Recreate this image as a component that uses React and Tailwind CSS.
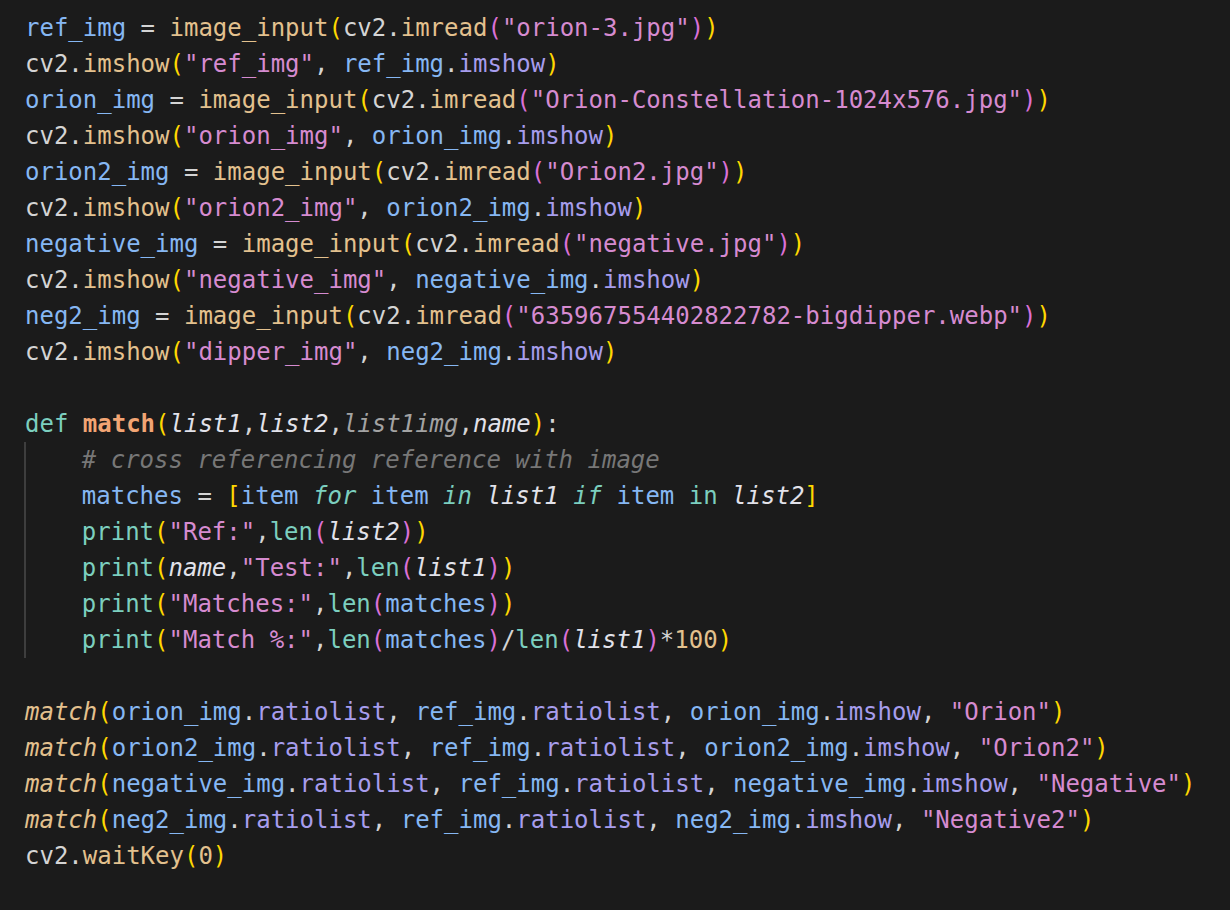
import React from "react";

const W = "text-[#d4d4d4]";
const V = "text-[#86b7f3]";
const F = "text-[#e3c18e]";
const S = "text-[#d68bd0]";
const P = "text-[#a79ded]";
const K = "text-[#7ccfbf]";
const KI = "text-[#7ccfbf] italic";
const Y = "text-[#ffd700]";
const PK = "text-[#da70d6]";
const PI = "text-[#e2e2ea] italic";
const DIM = "text-[#a3a3a3] italic";
const C = "text-[#777777] italic";
const FI = "text-[#e3c18e] italic";
const DN = "text-[#f2a574] font-bold";
const N = "text-[#e3c18e]";

const assign = (name, file) => [
  [name, V],
  [" = ", W],
  ["image_input", F],
  ["(", Y],
  ["cv2.", W],
  ["imread", F],
  ["(", PK],
  ['"' + file + '"', S],
  [")", PK],
  [")", Y],
];

const show = (label, name) => [
  ["cv2.", W],
  ["imshow", F],
  ["(", Y],
  ['"' + label + '"', S],
  [", ", W],
  [name, V],
  [".", W],
  ["imshow", P],
  [")", Y],
];

const call = (name, label) => [
  ["match", FI],
  ["(", Y],
  [name, V],
  [".", W],
  ["ratiolist", P],
  [", ", W],
  ["ref_img", V],
  [".", W],
  ["ratiolist", P],
  [", ", W],
  [name, V],
  [".", W],
  ["imshow", P],
  [", ", W],
  ['"' + label + '"', S],
  [")", Y],
];

const lines = [
  { t: assign("ref_img", "orion-3.jpg") },
  { t: show("ref_img", "ref_img") },
  { t: assign("orion_img", "Orion-Constellation-1024x576.jpg") },
  { t: show("orion_img", "orion_img") },
  { t: assign("orion2_img", "Orion2.jpg") },
  { t: show("orion2_img", "orion2_img") },
  { t: assign("negative_img", "negative.jpg") },
  { t: show("negative_img", "negative_img") },
  { t: assign("neg2_img", "635967554402822782-bigdipper.webp") },
  { t: show("dipper_img", "neg2_img") },
  { t: [] },
  {
    t: [
      ["def", K],
      [" ", W],
      ["match", DN],
      ["(", Y],
      ["list1", PI],
      [",", W],
      ["list2", PI],
      [",", W],
      ["list1img", DIM],
      [",", W],
      ["name", PI],
      [")", Y],
      [":", W],
    ],
  },
  { i: true, t: [["# cross referencing reference with image", C]] },
  {
    i: true,
    t: [
      ["matches", V],
      [" = ", W],
      ["[", Y],
      ["item", V],
      [" ", W],
      ["for", KI],
      [" ", W],
      ["item", V],
      [" ", W],
      ["in", KI],
      [" ", W],
      ["list1", PI],
      [" ", W],
      ["if", KI],
      [" ", W],
      ["item", V],
      [" ", W],
      ["in", K],
      [" ", W],
      ["list2", PI],
      ["]", Y],
    ],
  },
  {
    i: true,
    t: [
      ["print", K],
      ["(", Y],
      ['"Ref:"', S],
      [",", W],
      ["len", K],
      ["(", PK],
      ["list2", PI],
      [")", PK],
      [")", Y],
    ],
  },
  {
    i: true,
    t: [
      ["print", K],
      ["(", Y],
      ["name", PI],
      [",", W],
      ['"Test:"', S],
      [",", W],
      ["len", K],
      ["(", PK],
      ["list1", PI],
      [")", PK],
      [")", Y],
    ],
  },
  {
    i: true,
    t: [
      ["print", K],
      ["(", Y],
      ['"Matches:"', S],
      [",", W],
      ["len", K],
      ["(", PK],
      ["matches", V],
      [")", PK],
      [")", Y],
    ],
  },
  {
    i: true,
    t: [
      ["print", K],
      ["(", Y],
      ['"Match %:"', S],
      [",", W],
      ["len", K],
      ["(", PK],
      ["matches", V],
      [")", PK],
      ["/", W],
      ["len", K],
      ["(", PK],
      ["list1", PI],
      [")", PK],
      ["*", W],
      ["100", N],
      [")", Y],
    ],
  },
  { t: [] },
  { t: call("orion_img", "Orion") },
  { t: call("orion2_img", "Orion2") },
  { t: call("negative_img", "Negative") },
  { t: call("neg2_img", "Negative2") },
  {
    t: [
      ["cv2.", W],
      ["waitKey", F],
      ["(", Y],
      ["0", N],
      [")", Y],
    ],
  },
];

function Line({ line }) {
  return (
    <div className="h-[36px] whitespace-pre flex">
      {line.i ? (
        <span className="w-[57.8px] h-[36px] shrink-0 border-l-2 border-[#3e3e3e] -ml-px" />
      ) : null}
      <span>
        {line.t.map((tok, k) => (
          <span key={k} className={tok[1]}>
            {tok[0]}
          </span>
        ))}
      </span>
    </div>
  );
}

export default function App() {
  return (
    <div
      className="w-[1230px] h-[910px] bg-[#1b1b1b] overflow-hidden pt-[10px] pl-[25px] text-[24px] leading-[36px] text-[#d4d4d4]"
      style={{ fontFamily: '"DejaVu Sans Mono", "Liberation Mono", monospace' }}
    >
      {lines.map((line, k) => (
        <Line key={k} line={line} />
      ))}
    </div>
  );
}
